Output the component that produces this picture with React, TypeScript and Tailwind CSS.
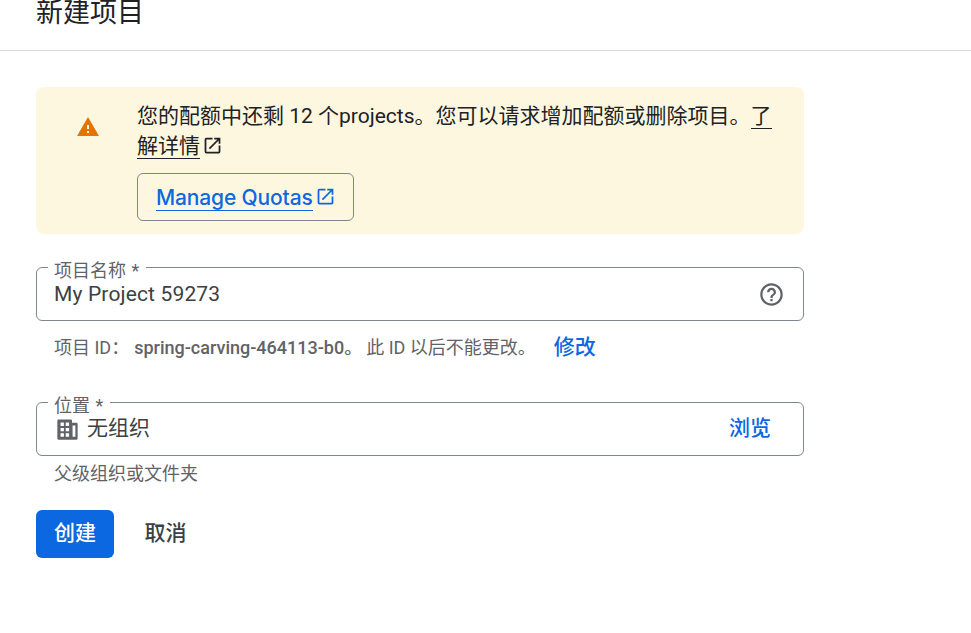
const font = "font-['Roboto','Noto_Sans_CJK_SC',sans-serif]";

function ExternalIcon({ className }: { className: string }) {
  return (
    <svg viewBox="0 0 24 24" className={className} fill="currentColor" aria-hidden="true">
      <path d="M19 19H5V5h7V3H5a2 2 0 0 0-2 2v14a2 2 0 0 0 2 2h14a2 2 0 0 0 2-2v-7h-2v7zM14 3v2h3.59l-9.83 9.83 1.41 1.41L19 6.41V10h2V3h-7z" />
    </svg>
  );
}

function Field({ label, children }: { label: string; children: React.ReactNode }) {
  return (
    <div className="relative flex h-[54px] items-center rounded-[6px] border border-[#80868b] pl-[17px] pr-[18px]">
      <span className="absolute -top-[8px] left-[11px] pl-[6px] pr-[7px] text-[18px] leading-[22px] text-[#5f6368] [word-spacing:1px]">
        <span className="absolute inset-x-0 top-0 h-[8px] bg-white" />
        <span className="relative">{label}</span>
      </span>
      {children}
    </div>
  );
}

export default function App() {
  return (
    <div className={`${font} h-[633px] w-[971px] overflow-hidden bg-white text-[#202124]`}>
      <header className="flex h-[51px] items-end border-b border-[#dadce0] pb-[19px] pl-9">
        <h1 className="text-[27px] font-normal leading-[36px]">新建项目</h1>
      </header>

      <main className="w-[804px] pl-9 pt-9">
        <section className="flex h-[147px] rounded-[8px] bg-[#fef7e0] pt-[14px]">
          <div className="flex w-[101px] shrink-0 justify-center pl-[2px] pt-[14px]">
            <svg viewBox="0 0 24 24" className="h-6 w-6 text-[#e37400]" fill="currentColor" aria-hidden="true">
              <path d="M1 21h22L12 2 1 21zm12-3h-2v-2h2v2zm0-4h-2v-4h2v4z" />
            </svg>
          </div>
          <div className="w-[640px]">
            <p className="text-[21px] leading-[30px]">
              您的配额中还剩 12 个projects。您可以请求增加配额或删除项目。
              <a className="border-b border-[#202124]">了解详情</a>
              <ExternalIcon className="ml-[2px] inline h-[21px] w-[21px] align-[-3px]" />
            </p>
            <button className="mt-[12px] flex h-[48px] w-[217px] items-center rounded-[6px] border border-[#80868b] pl-[18px] pt-[2px] text-[#0b68e0]">
              <span className="border-b border-[#0b68e0] font-['Inter'] text-[21px] font-medium leading-[25px] tracking-[-0.15px]">Manage Quotas</span>
              <ExternalIcon className="ml-[2px] h-[21px] w-[21px] -translate-y-[2px]" />
            </button>
          </div>
        </section>

        <div className="mt-[33px]">
          <Field label="项目名称 *">
            <span className="flex-1 pt-[2px] text-[21px] tracking-[0.15px] text-[#3c4043]">My Project 59273</span>
            <svg viewBox="0 0 24 24" className="h-[27px] w-[27px] text-[#5f6368]" fill="currentColor" aria-hidden="true">
              <path d="M11 18h2v-2h-2v2zm1-16C6.48 2 2 6.48 2 12s4.48 10 10 10 10-4.48 10-10S17.52 2 12 2zm0 18c-4.41 0-8-3.59-8-8s3.59-8 8-8 8 3.59 8 8-3.59 8-8 8zm0-14c-2.21 0-4 1.79-4 4h2c0-1.1.9-2 2-2s2 .9 2 2c0 2-3 1.75-3 5h2c0-2.25 3-2.5 3-5 0-2.21-1.79-4-4-4z" />
            </svg>
          </Field>
          <div className="flex h-[52px] items-center pl-[18px] text-[18px] text-[#5f6368]">
            <span>项目 ID：</span>
            <b className="ml-[5px] font-medium">spring-carving-464113-b0。</b>
            <span className="ml-[4px]">此 ID 以后不能更改。</span>
            <a className="ml-[18px] pt-[2px] text-[21px] font-medium text-[#0b68e0]">修改</a>
          </div>
        </div>

        <div className="mt-[29px]">
          <Field label="位置 *">
            <svg viewBox="0 0 24 24" className="h-[27px] w-[27px] text-[#5f6368]" fill="currentColor" aria-hidden="true">
              <path
                fillRule="evenodd"
                d="M4 3h11a1 1 0 0 1 1 1v2h4a1 1 0 0 1 1 1v13a1 1 0 0 1-1 1H4a1 1 0 0 1-1-1V4a1 1 0 0 1 1-1zm1.8 2.8v3h3v-3h-3zm4.6 0v3h3v-3h-3zM5.800 10.600v3h3v-3h-3zm4.600 0v3h3v-3h-3zm-4.600 4.800v3h3v-3h-3zm4.600 0v3h3v-3h-3zM16.500 8.500v10H19v-10h-2.500z"
              />
            </svg>
            <span className="ml-[6px] flex-1 text-[21px] text-[#3c4043]">无组织</span>
            <a className="mr-[14px] text-[21px] font-medium text-[#0b68e0]">浏览</a>
          </Field>
          <p className="pl-[18px] pt-[5px] text-[18px] leading-[26px] text-[#5f6368]">父级组织或文件夹</p>
        </div>

        <div className="mt-[23px] flex items-center gap-[10px]">
          <button className="h-[48px] w-[78px] rounded-[6px] bg-[#0b68e0] text-[21px] font-medium text-white">创建</button>
          <button className="h-[48px] w-[83px] text-[21px] font-medium text-[#3c4043]">取消</button>
        </div>
      </main>
    </div>
  );
}
